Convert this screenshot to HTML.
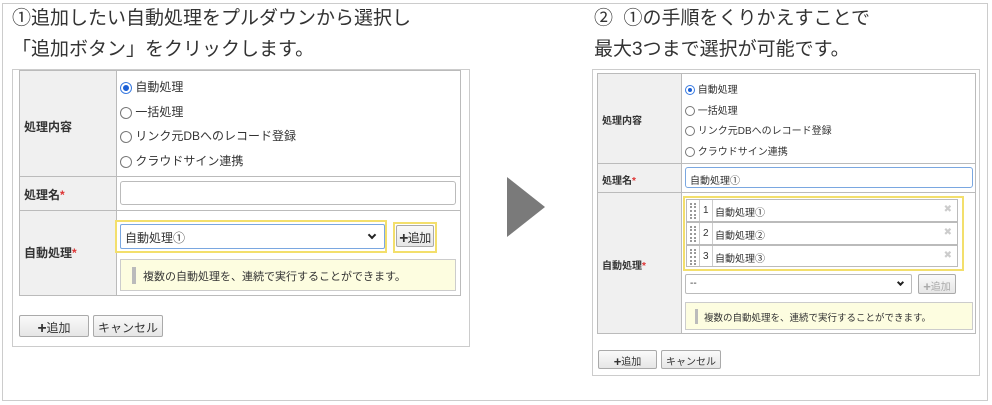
<!DOCTYPE html>
<html><head><meta charset="utf-8"><style>
*{box-sizing:border-box;margin:0;padding:0;white-space:nowrap}
body{width:992px;height:405px;background:#fff;position:relative;overflow:hidden;font-family:"Liberation Sans","Noto Sans CJK JP",sans-serif;color:#333}
.a{position:absolute}
.frame{left:2px;top:3px;width:986px;height:398px;border:1px solid #ccc}
.title{font-size:19px;color:#333;white-space:nowrap;line-height:22px}
.box{border:1px solid #ccc;background:#fff}
.lab{background:#f0f0f0;border:1px solid #bbb;font-weight:bold;color:#333}
.cell{border:1px solid #bbb;background:#fff}
.req{color:#d33}
.radio{display:inline-block;border:1px solid #777;border-radius:50%;background:#fff;vertical-align:middle;position:relative}
.radio.on{border-color:#3a7be0}
.radio.on::after{content:"";position:absolute;left:2px;top:2px;right:2px;bottom:2px;border-radius:50%;background:#1a5fd6}
.btn{border:1px solid #aaa;border-radius:2px;background:linear-gradient(#fafafa,#e6e6e6);text-align:center;color:#333}
.note{background:#fdfde0;border:1px solid #ccc;color:#333}
.bar{position:absolute;background:#bbb}
.yl{border:2px solid #f3df6c}
.item{border:1px solid #bbb;background:#fff;font-size:10px}
.chev{position:absolute;width:6px;height:6px;border-right:2px solid #222;border-bottom:2px solid #222;transform:rotate(45deg)}
.pl{font-weight:bold;font-size:1.3em;line-height:0.8;vertical-align:-1px}
</style></head><body>
<div class="a frame"></div>

<div class="a title" style="left:12px;top:8px">①追加したい自動処理をプルダウンから選択し</div>
<div class="a title" style="left:12px;top:39px">「追加ボタン」をクリックします。</div>

<div class="a box" style="left:12px;top:69px;width:458px;height:278px"></div>
<div class="a lab" style="left:19px;top:70px;width:98px;height:107px;font-size:12px;padding:47px 0 0 4px">処理内容</div>
<div class="a cell" style="left:116px;top:70px;width:345px;height:107px;font-size:12px">
 <div class="a" style="left:3px;top:7px"><span class="radio on" style="width:12px;height:12px"></span> 自動処理</div>
 <div class="a" style="left:3px;top:32px"><span class="radio" style="width:12px;height:12px"></span> 一括処理</div>
 <div class="a" style="left:3px;top:56px"><span class="radio" style="width:12px;height:12px"></span> リンク元DBへのレコード登録</div>
 <div class="a" style="left:3px;top:81px"><span class="radio" style="width:12px;height:12px"></span> クラウドサイン連携</div>
</div>
<div class="a lab" style="left:19px;top:176px;width:98px;height:35px;font-size:12px;padding:9px 0 0 4px">処理名<span class="req">*</span></div>
<div class="a cell" style="left:116px;top:176px;width:345px;height:35px"></div>
<div class="a" style="left:120px;top:181px;width:336px;height:24px;border:1px solid #bbb;border-radius:3px"></div>
<div class="a lab" style="left:19px;top:210px;width:98px;height:86px;font-size:12px;padding:33px 0 0 4px">自動処理<span class="req">*</span></div>
<div class="a cell" style="left:116px;top:210px;width:345px;height:86px"></div>
<div class="a yl" style="left:115px;top:220px;width:272px;height:33px"></div>
<div class="a" style="left:120px;top:224px;width:265px;height:25px;border:1px solid #7aa7e0;border-radius:2px;font-size:12px;padding:4px 0 0 4px">自動処理①<span class="chev" style="right:9px;top:7px"></span></div>
<div class="a yl" style="left:393px;top:222px;width:44px;height:31px"></div>
<div class="a btn" style="left:396px;top:225px;width:38px;height:22px;font-size:12px;padding-top:3px;letter-spacing:-0.5px"><span class="pl">+</span>追加</div>
<div class="a note" style="left:120px;top:259px;width:336px;height:32px;font-size:11px;padding:8px 0 0 22px">複数の自動処理を、連続で実行することができます。<div class="bar" style="left:11px;top:7px;width:4px;height:17px"></div></div>
<div class="a btn" style="left:19px;top:315px;width:70px;height:22px;font-size:12px;padding-top:3px"><span class="pl">+</span>追加</div>
<div class="a btn" style="left:93px;top:315px;width:70px;height:22px;font-size:12px;padding-top:3px">キャンセル</div>

<svg class="a" style="left:505px;top:175px" width="42" height="64"><polygon points="2,2 40,32 2,62" fill="#7a7a7a"/></svg>

<div class="a title" style="left:594px;top:8px">②&nbsp;&nbsp;①の手順をくりかえすことで</div>
<div class="a title" style="left:594px;top:39px">最大3つまで選択が可能です。</div>

<div class="a box" style="left:592px;top:69px;width:388px;height:307px"></div>
<div class="a lab" style="left:597px;top:73px;width:85px;height:91px;font-size:10px;padding:38px 0 0 4px">処理内容</div>
<div class="a cell" style="left:681px;top:73px;width:295px;height:91px;font-size:10px">
 <div class="a" style="left:3px;top:7px"><span class="radio on" style="width:10px;height:10px"></span> 自動処理</div>
 <div class="a" style="left:3px;top:28px"><span class="radio" style="width:10px;height:10px"></span> 一括処理</div>
 <div class="a" style="left:3px;top:48px"><span class="radio" style="width:10px;height:10px"></span> リンク元DBへのレコード登録</div>
 <div class="a" style="left:3px;top:69px"><span class="radio" style="width:10px;height:10px"></span> クラウドサイン連携</div>
</div>
<div class="a lab" style="left:597px;top:163px;width:85px;height:30px;font-size:10px;padding:8px 0 0 4px">処理名<span class="req">*</span></div>
<div class="a cell" style="left:681px;top:163px;width:295px;height:30px"></div>
<div class="a" style="left:685px;top:167px;width:288px;height:21px;border:1px solid #7aa7e0;border-radius:3px;font-size:10px;padding:4px 0 0 4px">自動処理①</div>
<div class="a lab" style="left:597px;top:192px;width:85px;height:142px;font-size:10px;padding:64px 0 0 4px">自動処理<span class="req">*</span></div>
<div class="a cell" style="left:681px;top:192px;width:295px;height:142px"></div>
<div class="a yl" style="left:683px;top:196px;width:281px;height:75px"></div>
<div class="a" style="left:686px;top:199px;width:272px;height:68px;border:1px solid #bbb"></div>
<div class="a item" style="left:686px;top:199px;width:272px;height:23px"><span class="a" style="left:3px;top:3px;width:6px;height:16px;border-left:2px dotted #999;border-right:2px dotted #999"></span><span class="a" style="left:12px;top:0;height:21px;border-left:1px solid #ccc"></span><span class="a" style="left:16px;top:5px">1</span><span class="a" style="left:25px;top:0;height:21px;border-left:1px solid #ccc"></span><span class="a" style="left:28px;top:4px">自動処理①</span><span class="a" style="right:5px;top:4px;color:#ccc">✖</span></div>
<div class="a item" style="left:686px;top:222px;width:272px;height:23px"><span class="a" style="left:3px;top:3px;width:6px;height:16px;border-left:2px dotted #999;border-right:2px dotted #999"></span><span class="a" style="left:12px;top:0;height:21px;border-left:1px solid #ccc"></span><span class="a" style="left:16px;top:5px">2</span><span class="a" style="left:25px;top:0;height:21px;border-left:1px solid #ccc"></span><span class="a" style="left:28px;top:4px">自動処理②</span><span class="a" style="right:5px;top:4px;color:#ccc">✖</span></div>
<div class="a item" style="left:686px;top:245px;width:272px;height:22px"><span class="a" style="left:3px;top:3px;width:6px;height:16px;border-left:2px dotted #999;border-right:2px dotted #999"></span><span class="a" style="left:12px;top:0;height:20px;border-left:1px solid #ccc"></span><span class="a" style="left:16px;top:5px">3</span><span class="a" style="left:25px;top:0;height:20px;border-left:1px solid #ccc"></span><span class="a" style="left:28px;top:4px">自動処理③</span><span class="a" style="right:5px;top:4px;color:#ccc">✖</span></div>
<div class="a" style="left:685px;top:274px;width:227px;height:20px;border:1px solid #bbb;border-radius:2px;font-size:10px;padding:3px 0 0 4px">--<span class="chev" style="right:8px;top:5px;width:5px;height:5px"></span></div>
<div class="a btn" style="left:918px;top:274px;width:38px;height:20px;font-size:10px;padding-top:3px;color:#aaa"><span class="pl">+</span>追加</div>
<div class="a note" style="left:685px;top:302px;width:288px;height:28px;font-size:9.5px;padding:7px 0 0 18px">複数の自動処理を、連続で実行することができます。<div class="bar" style="left:9px;top:6px;width:3px;height:15px"></div></div>
<div class="a btn" style="left:598px;top:350px;width:59px;height:19px;font-size:10px;padding-top:2px"><span class="pl">+</span>追加</div>
<div class="a btn" style="left:661px;top:350px;width:60px;height:19px;font-size:10px;padding-top:2px">キャンセル</div>
</body></html>
